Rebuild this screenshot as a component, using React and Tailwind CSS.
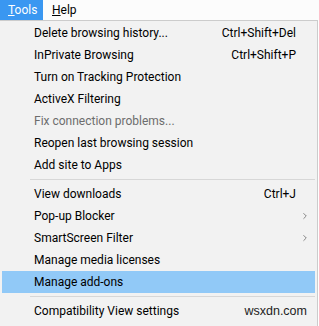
import { ChevronRight } from "lucide-react";

const items = [
  { label: "Delete browsing history...", shortcut: "Ctrl+Shift+Del" },
  { label: "InPrivate Browsing", shortcut: "Ctrl+Shift+P" },
  { label: "Turn on Tracking Protection" },
  { label: "ActiveX Filtering" },
  { label: "Fix connection problems...", disabled: true },
  { label: "Reopen last browsing session" },
  { label: "Add site to Apps" },
  { separator: true },
  { label: "View downloads", shortcut: "Ctrl+J" },
  { label: "Pop-up Blocker", submenu: true },
  { label: "SmartScreen Filter", submenu: true },
  { label: "Manage media licenses" },
  { label: "Manage add-ons", active: true },
  { separator: true },
  { label: "Compatibility View settings", watermark: "wsxdn.com" },
];

function MenuRow({ item }) {
  if (item.separator) {
    return (
      <div className="h-[7px] flex items-center pl-[30px] pr-[2px]">
        <div className="h-px w-full bg-[#d7d7d7]" />
      </div>
    );
  }
  return (
    <div
      className={`relative h-[22px] mx-[2px] flex items-center pl-[32px] pr-[19px] ${
        item.active ? "bg-[#91c9f7]" : ""
      } ${item.disabled ? "text-[#6d6d6d]" : "text-black"}`}
    >
      <span className="flex-1 whitespace-nowrap">{item.label}</span>
      {item.shortcut && <span className="whitespace-nowrap">{item.shortcut}</span>}
      {item.submenu && (
        <ChevronRight className="absolute right-[5px] text-[#444]" size={10} strokeWidth={1.5} />
      )}
      {item.watermark && (
        <span className="font-['Liberation_Sans'] text-[12.5px] text-[#222] mr-[-11px]">{item.watermark}</span>
      )}
    </div>
  );
}

export default function App() {
  return (
    <div className="w-[319px] h-[326px] overflow-hidden bg-white font-['Roboto',sans-serif] text-[12px] leading-none">
      <div className="flex h-[20px] bg-[#fcfcfc]">
        <div className="w-[43px] bg-[#3a97f1] text-white flex items-center pl-[8px]">
          <span><span className="underline">T</span>ools</span>
        </div>
        <div className="flex items-center pl-[9px] text-black">
          <span><span className="underline">H</span>elp</span>
        </div>
      </div>
      <div className="w-[318px] h-[306px] bg-[#f2f2f2] border-t border-r border-[#cccccc] pt-[1px]">
        {items.map((item, i) => (
          <MenuRow key={i} item={item} />
        ))}
      </div>
    </div>
  );
}
